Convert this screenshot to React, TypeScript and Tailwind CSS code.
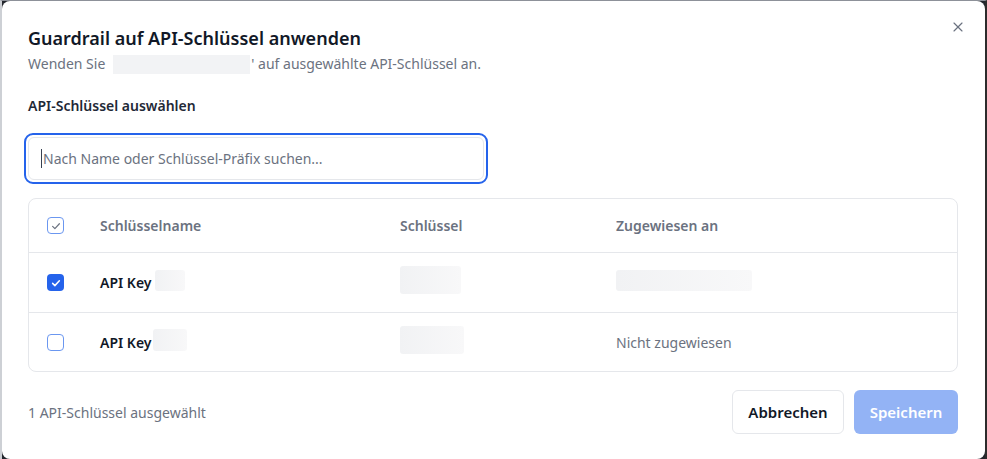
import { X } from "lucide-react";

const font = { fontFamily: '"Noto Sans", "Open Sans", sans-serif' };

function Check({ state }: { state: "on" | "off" | "all" }) {
  if (state === "on")
    return (
      <span className="flex h-[17px] w-[17px] items-center justify-center rounded-[4px] bg-[#2563eb]">
        <svg viewBox="0 0 16 16" className="h-[12px] w-[12px]" fill="none" stroke="white" strokeWidth="2" strokeLinecap="round" strokeLinejoin="round">
          <path d="M3.5 8.5l3 3 6-6.5" />
        </svg>
      </span>
    );
  return (
    <span className="flex h-[17px] w-[17px] items-center justify-center rounded-[4px] border border-[#6b97f0] bg-white">
      {state === "all" && (
        <svg viewBox="0 0 16 16" className="h-[12px] w-[12px]" fill="none" stroke="#6b7280" strokeWidth="1.6" strokeLinecap="round" strokeLinejoin="round">
          <path d="M3.5 8.5l3 3 6-6.5" />
        </svg>
      )}
    </span>
  );
}

function Blur({ w, h = "h-[28px]" }: { w: string; h?: string }) {
  return <span className={`inline-block rounded-[3px] bg-gradient-to-r from-[#f1f2f4] to-[#f8f8f9] ${w} ${h}`} />;
}

export default function App() {
  return (
    <div style={font} className="h-[459px] w-[987px] bg-[#23262d]">
      <div className="h-full border-t border-l-2 border-r-2 border-t-[#8d9199] border-l-[#cdd0d5] border-r-[#2c2c2c]">
        <div className="relative flex h-full flex-col rounded-lg bg-white pl-[26px] pr-[27px]">
          <button className="absolute right-[19px] top-[18px] text-[#6b7280]">
            <X size={16} strokeWidth={1.75} />
          </button>
          <h2 className="mt-[25px] text-[18px] font-semibold leading-[25px] text-[#111827]">Guardrail auf API-Schlüssel anwenden</h2>
          <p className="mt-[3px] flex items-center text-[14px] leading-[20px] text-[#6b7280]">
            Wenden Sie
            <span className="ml-[8px] mr-[1px] inline-block h-[19px] w-[137px] bg-[#f2f3f5]" />
            ' auf ausgewählte API-Schlüssel an.
          </p>
          <div className="mt-[22px] text-[14px] font-semibold leading-[20px] text-[#1f2937]">API-Schlüssel auswählen</div>
          <div className="-ml-[4px] mt-[17px] w-[464px] rounded-[9px] border-2 border-[#2563eb] p-[2px]">
            <div className="flex h-[43px] items-center rounded-[6px] border border-[#e5e7eb] px-[12px] text-[14px] text-[#6b7280]">
              <span className="mr-px inline-block h-[19px] w-px bg-[#374151]" />
              Nach Name oder Schlüssel-Präfix suchen...
            </div>
          </div>
          <div className="mt-[14px] rounded-lg border border-[#e5e7eb] text-[14px]">
            <div className="flex h-[54px] items-center border-b border-[#e5e7eb] font-semibold text-[#6b7280]">
              <div className="w-[71px] pl-[18px]"><Check state="all" /></div>
              <div className="w-[300px]">Schlüsselname</div>
              <div className="w-[216px]">Schlüssel</div>
              <div>Zugewiesen an</div>
            </div>
            <div className="flex h-[60px] items-center border-b border-[#e5e7eb]">
              <div className="w-[71px] pl-[18px]"><Check state="on" /></div>
              <div className="flex w-[300px] items-center font-semibold text-[#111827]">API Key<span className="ml-[4px]"><Blur w="w-[30px]" h="h-[21px]" /></span></div>
              <div className="w-[216px]"><Blur w="w-[61px]" /></div>
              <div><Blur w="w-[136px]" h="h-[21px]" /></div>
            </div>
            <div className="flex h-[58px] items-center">
              <div className="w-[71px] pl-[18px]"><Check state="off" /></div>
              <div className="flex w-[300px] items-center font-semibold text-[#111827]">API Key<span className="ml-[2px]"><Blur w="w-[34px]" h="h-[22px]" /></span></div>
              <div className="w-[216px]"><Blur w="w-[64px]" /></div>
              <div className="text-[#6b7280]">Nicht zugewiesen</div>
            </div>
          </div>
          <div className="mt-[18px] flex items-center justify-between">
            <span className="text-[14px] text-[#6b7280]">1 API-Schlüssel ausgewählt</span>
            <div className="flex gap-[10px]">
              <button className="h-[44px] w-[112px] rounded-[6px] border border-[#e5e7eb] bg-white text-[15px] font-semibold text-[#111827]">Abbrechen</button>
              <button className="h-[44px] w-[104px] rounded-[6px] bg-[#93b3f5] text-[15px] font-semibold text-white">Speichern</button>
            </div>
          </div>
        </div>
      </div>
    </div>
  );
}
